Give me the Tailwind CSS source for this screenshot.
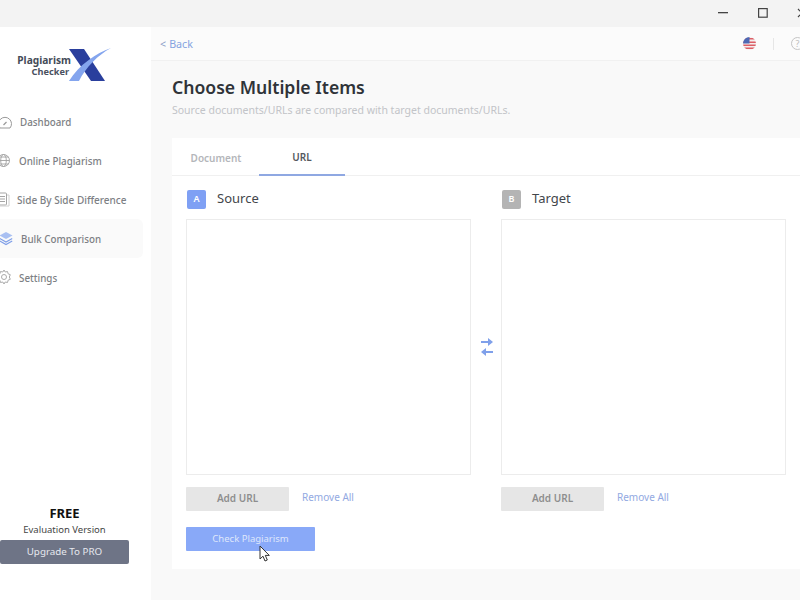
<!DOCTYPE html>
<html>
<head>
<meta charset="utf-8">
<script src="https://cdn.jsdelivr.net/npm/@tailwindcss/browser@4"></script>
</head>
<body class="w-[800px] h-[600px] overflow-hidden bg-[#f9f9f9] font-['Noto_Sans','Open_Sans',sans-serif] relative">
  <!-- Title bar -->
  <div class="h-[27px] bg-[#f3f3f3] flex items-center justify-end relative">
    <svg class="absolute left-[718px] top-[12px]" width="10" height="2"><rect width="10" height="1.3" fill="#444"/></svg>
    <svg class="absolute left-[758px] top-[8px]" width="10" height="10"><rect x=".6" y=".6" width="8.6" height="8.6" fill="none" stroke="#444" stroke-width="1.2"/></svg>
    <svg class="absolute left-[797px] top-[8px]" width="10" height="10"><path d="M1 1l8 8M9 1l-8 8" stroke="#444" stroke-width="1.2"/></svg>
  </div>

  <div class="flex h-[573px]">
    <!-- Sidebar -->
    <aside class="w-[151px] bg-white flex flex-col shrink-0">
      <div class="h-[72px] relative shrink-0">
        <div class="absolute left-[14px] top-[27px] w-[57px] flex flex-col items-end font-bold text-[#444b58] whitespace-nowrap">
          <span class="text-[10.200px] leading-[12px]">Plagiarism</span>
          <span class="text-[9.200px] leading-[12px] text-[#4a5160] pr-[2px]">Checker</span>
        </div>
        <svg class="absolute left-[68px] top-[21px]" width="44" height="34" viewBox="0 0 44 34">
          <path d="M1 1h15l21 32H23z" fill="#2a3f9d"/>
          <path d="M43 0C28 5 11 17 1 33h10C18 19 30 7 43 0z" fill="#84a5ee"/>
        </svg>
      </div>
      <nav class="flex flex-col pt-[3px] text-[9.8px] font-medium text-[#7d7f84]">
        <div class="h-[39px] w-[143px] flex items-center relative pl-[20px] pt-[3px]">
          <svg class="absolute left-[-3px] top-[12px]" width="16" height="16" viewBox="0 0 16 16" fill="none" stroke="#9a9a9a"><path d="M3 14a6.500 6.500 0 1 1 10 0z"/><path d="M6.500 11l3-3" stroke-width="1.300"/></svg>
          Dashboard
        </div>
        <div class="h-[39px] w-[143px] flex items-center relative pl-[19px] pt-[3px]">
          <svg class="absolute left-[-3px] top-[12px]" width="14" height="15" viewBox="0 0 14 15" fill="none" stroke="#a0a0a0" stroke-width=".9"><circle cx="6.500" cy="7.500" r="6"/><ellipse cx="6.500" cy="7.500" rx="2.800" ry="6"/><path d="M.5 7.500h12M1.500 4h10M1.500 11h10"/></svg>
          Online Plagiarism
        </div>
        <div class="h-[39px] w-[143px] flex items-center relative pl-[17px] pt-[2px] text-[10px]">
          <svg class="absolute left-[-3px] top-[12px]" width="13" height="15" viewBox="0 0 13 15" fill="none" stroke="#a5a5a5"><rect x=".5" y="1" width="9" height="12" rx="1"/><path d="M3 4.500h5M3 7h5M3 9.500h5"/><path d="M10 3h2v11H3" stroke="#d0d0d0"/></svg>
          Side By Side Difference
        </div>
        <div class="h-[39px] w-[143px] flex items-center relative pl-[21px] pt-[3px] bg-[#fafafa] rounded-r-md">
          <svg class="absolute left-[-1px] top-[12px]" width="15" height="15" viewBox="0 0 15 15"><path d="M7 1l6.500 3.500L7 8 .5 4.500z" fill="#a9c0f2"/><path d="M.8 7.500L7 11l6.200-3.500M.8 10L7 13.500 13.200 10" fill="none" stroke="#7f9fe8" stroke-width="1.200"/></svg>
          Bulk Comparison
        </div>
        <div class="h-[39px] w-[143px] flex items-center relative pl-[19px] pt-[3px]">
          <svg class="absolute left-[-3px] top-[11px]" width="14" height="16" viewBox="0 0 14 16" fill="none" stroke="#ababab"><path d="M7 1l1.200 2 2.300-.5.600 2.300 2.200.9-1 2.300 1 2.300-2.200.9-.6 2.300-2.300-.5L7 15l-1.200-2-2.300.5-.6-2.300-2.200-.9 1-2.300-1-2.300 2.200-.9.6-2.300 2.300.5z"/><circle cx="7" cy="8" r="2.500"/></svg>
          Settings
        </div>
      </nav>
      <div class="mt-auto w-[129px] flex flex-col items-center pb-[36px]">
        <div class="text-[13px] leading-[16px] font-bold text-[#111]">FREE</div>
        <div class="text-[9.500px] leading-[14px] mt-[2px] text-[#444]">Evaluation Version</div>
        <div class="mt-[3px] w-full h-[24px] rounded-[2px] bg-[#6e7486] text-[#e6e8ee] text-[9.800px] flex items-center justify-center">Upgrade To PRO</div>
      </div>
    </aside>

    <!-- Main -->
    <main class="flex-1 flex flex-col min-w-0">
      <div class="h-[34px] shrink-0 border-b border-[#f1f1f1] bg-[#fbfbfb] flex items-center pl-[9px] pt-[2px] relative text-[10.700px] text-[#85a3e0]">
        <span class="mr-[3px] text-[#8d9fc8]">&lt;</span> Back
        <svg class="absolute left-[592px] top-[10px]" width="13" height="13" viewBox="0 0 13 13">
          <clipPath id="flag"><circle cx="6.500" cy="6.500" r="6.500"/></clipPath>
          <g clip-path="url(#flag)">
            <rect width="13" height="13" fill="#f4eeee"/>
            <path d="M0 1h13v1.500H0zM0 4.500h13V6H0zM0 7.500h13V9H0zM0 10.500h13V12H0z" fill="#dc5f66"/>
            <rect width="6.500" height="6.500" fill="#4d68b4"/>
          </g>
        </svg>
        <div class="absolute left-[622px] top-[11px] w-px h-[12px] bg-[#e6e6e6]"></div>
        <div class="absolute left-[640px] top-[10px] w-[13px] h-[13px] rounded-full border border-[#c4c4c4] text-[9px] leading-[11px] text-center text-[#bdbdbd]">?</div>
      </div>

      <div class="pl-[21px] pt-[13px] flex flex-col">
        <h1 class="text-[17.600px] leading-[26px] font-semibold text-[#2f3338]">Choose Multiple Items</h1>
        <p class="text-[10.500px] leading-[16px] text-[#c2c4c8] mt-[2px]">Source documents/URLs are compared with target documents/URLs.</p>

        <section class="mt-[20px] h-[431px] bg-white flex flex-col">
          <div class="flex h-[38px] border-b border-[#f0f0f0] text-[10px] font-semibold shrink-0">
            <div class="w-[87px] flex items-center justify-center text-[#b4b6ba] pl-[1px] pt-[3px]">Document</div>
            <div class="w-[86px] h-[38px] flex items-center justify-center text-[#55585e] border-b-2 border-[#8fa8e2] pt-[3px]">URL</div>
          </div>

          <div class="flex pl-[15px] pt-[13px]">
            <!-- Source -->
            <div class="w-[285px] flex flex-col shrink-0">
              <div class="flex items-center h-[20px]">
                <span class="w-[19px] h-[19px] rounded-[2px] bg-[#7fa0f4] text-white text-[9px] font-semibold flex items-center justify-center">A</span>
                <span class="ml-[11px] text-[13px] text-[#43464b]">Source</span>
              </div>
              <div class="mt-[10px] w-[285px] h-[256px] ml-[-1px] border border-[#ececec]"></div>
              <div class="mt-[12px] flex items-start">
                <div class="w-[103px] h-[24px] ml-[-1px] pb-[2px] rounded-[1px] bg-[#e6e6e6] text-[10px] font-semibold text-[#8e8e8e] flex items-center justify-center">Add URL</div>
                <span class="ml-[13px] text-[10px] leading-[20px] text-[#92a9e2]">Remove All</span>
              </div>
              <div class="mt-[16px] ml-[-1px] w-[129px] h-[24px] rounded-[1px] bg-[#89a9f8] text-[#dfe7fb] text-[9.500px] flex items-center justify-center">Check Plagiarism</div>
            </div>

            <!-- Swap arrows -->
            <div class="w-[29px] shrink-0 flex items-center justify-center h-[276px] mt-[20px]">
              <svg width="12" height="18" viewBox="0 0 12 18" fill="#7fa0ea"><path d="M0 3h7V0l5 4-5 4V5H0z"/><path d="M12 13H5v-3l-5 4 5 4v-3h7z"/></svg>
            </div>

            <!-- Target -->
            <div class="w-[285px] flex flex-col shrink-0">
              <div class="flex items-center h-[20px]">
                <span class="w-[19px] h-[19px] ml-[1px] rounded-[2px] bg-[#b4b4b4] text-white text-[9px] font-semibold flex items-center justify-center">B</span>
                <span class="ml-[11px] text-[13px] text-[#43464b]">Target</span>
              </div>
              <div class="mt-[10px] h-[256px] border border-[#ececec]"></div>
              <div class="mt-[12px] flex items-start">
                <div class="w-[103px] h-[24px] pb-[2px] rounded-[1px] bg-[#e6e6e6] text-[10px] font-semibold text-[#8e8e8e] flex items-center justify-center">Add URL</div>
                <span class="ml-[13px] text-[10px] leading-[20px] text-[#92a9e2]">Remove All</span>
              </div>
            </div>
          </div>
        </section>
      </div>
    </main>
  </div>

  <!-- Mouse cursor -->
  <svg class="absolute left-[259px] top-[545px]" width="12" height="18" viewBox="0 0 12 18"><path d="M1 1v13l3-2.800 2 4.800 2.300-1-2-4.600h4z" fill="#fff" stroke="#333" stroke-width="1"/></svg>
</body>
</html>
